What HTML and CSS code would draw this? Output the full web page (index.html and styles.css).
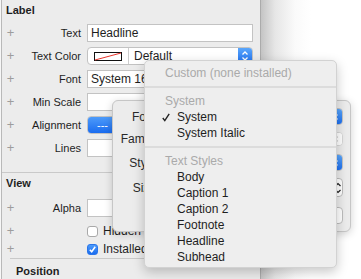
FILE: index.html
```html
<!doctype html>
<html lang="en">
  <head>
    <meta charset="UTF-8" />
    <meta name="viewport" content="width=device-width, initial-scale=1.0" />
    <title>Attributes Inspector</title>
    <link rel="stylesheet" href="styles.css">
  </head>
  <body>
    <!-- Inspector panel -->
    <div class="panel">
      <div class="section-title">Label</div>
      <div class="rows">
        <div class="row">
          <span class="plus">+</span>
          <span class="label">Text</span>
          <div class="field">Headline</div>
        </div>
        <div class="row">
          <span class="plus">+</span>
          <span class="label">Text Color</span>
          <div class="popup">
            <div class="swatch">
              <svg width="28" height="9" viewBox="0 0 28 9">
                <rect x="0.5" y="0.5" width="27" height="8" fill="#fff" stroke="#111" />
                <line x1="1" y1="8" x2="27" y2="1" stroke="#e8352c" stroke-width="1" />
              </svg>
            </div>
            <div class="popup-value">Default</div>
            <div class="stepper blue">
              <svg width="8" height="12" viewBox="0 0 8 12">
                <path d="M1.5 4.5 L4 2 L6.5 4.5 M1.5 7.5 L4 10 L6.5 7.5" fill="none" stroke="#fff" stroke-width="1.3" />
              </svg>
            </div>
          </div>
        </div>
        <div class="row">
          <span class="plus">+</span>
          <span class="label">Font</span>
          <div class="field">System 16.0</div>
        </div>
        <div class="row">
          <span class="plus">+</span>
          <span class="label">Min Scale</span>
          <div class="field"></div>
        </div>
        <div class="row">
          <span class="plus">+</span>
          <span class="label">Alignment</span>
          <div class="segmented">
            <div class="segment active">---</div>
            <div class="segment"></div>
            <div class="segment"></div>
          </div>
        </div>
        <div class="row">
          <span class="plus">+</span>
          <span class="label">Lines</span>
          <div class="field"></div>
        </div>
      </div>

      <div class="divider"></div>
      <div class="section-title">View</div>
      <div class="rows view-rows">
        <div class="row">
          <span class="plus">+</span>
          <span class="label">Alpha</span>
          <div class="field"></div>
        </div>
        <div class="row check-row">
          <span class="plus">+</span>
          <span class="label"></span>
          <label class="check"><span class="box"></span>Hidden</label>
        </div>
        <div class="row check-row">
          <span class="plus">+</span>
          <span class="label"></span>
          <label class="check">
            <span class="box checked">
              <svg width="9" height="9" viewBox="0 0 9 9">
                <path d="M1.8 4.8 L3.7 6.8 L7.2 1.8" fill="none" stroke="#fff" stroke-width="1.5" />
              </svg>
            </span>Installed
          </label>
        </div>
      </div>
      <div class="divider inset"></div>
      <div class="sub-title">Position</div>
    </div>
    <div class="backdrop"></div>

    <!-- Font popover (mostly hidden under the menu) -->
    <div class="font-popover">
      <div class="pop-row font-row">
        <span class="pop-label">Font</span>
        <div class="pop-popup">
          <span></span>
          <div class="stepper blue">
            <svg width="8" height="12" viewBox="0 0 8 12">
              <path d="M1.5 4.5 L4 2 L6.5 4.5 M1.5 7.5 L4 10 L6.5 7.5" fill="none" stroke="#fff" stroke-width="1.3" />
            </svg>
          </div>
        </div>
      </div>
      <div class="pop-row family-row">
        <span class="pop-label">Family</span>
        <div class="pop-popup disabled">
          <span></span>
          <div class="stepper grey">
            <svg width="8" height="12" viewBox="0 0 8 12">
              <path d="M1.5 4.5 L4 2 L6.5 4.5 M1.5 7.5 L4 10 L6.5 7.5" fill="none" stroke="#b5b5b5" stroke-width="1.2" />
            </svg>
          </div>
        </div>
      </div>
      <div class="pop-row style-row">
        <span class="pop-label">Style</span>
        <div class="pop-popup">
          <span></span>
          <div class="stepper blue">
            <svg width="8" height="12" viewBox="0 0 8 12">
              <path d="M1.5 4.5 L4 2 L6.5 4.5 M1.5 7.5 L4 10 L6.5 7.5" fill="none" stroke="#fff" stroke-width="1.3" />
            </svg>
          </div>
        </div>
      </div>
      <div class="pop-row size-row">
        <span class="pop-label">Size</span>
        <div class="size-field"></div>
        <div class="size-stepper">
          <svg width="8" height="16" viewBox="0 0 8 16">
            <path d="M1.5 6 L4 3.5 L6.5 6 M1.5 10 L4 12.5 L6.5 10" fill="none" stroke="#222" stroke-width="1.2" />
          </svg>
        </div>
      </div>
      <div class="pop-row button-row">
        <div class="done-btn"></div>
      </div>
    </div>

    <!-- Font menu -->
    <div class="font-menu">
      <div class="menu-item header">Custom (none installed)</div>
      <div class="menu-sep"></div>
      <div class="menu-item header">System</div>
      <div class="menu-item">
        <svg class="tick" width="8" height="9" viewBox="0 0 8 9">
          <path d="M0.8 5 L2.8 7.6 L7.2 0.8" fill="none" stroke="#222" stroke-width="1.4" />
        </svg>System
      </div>
      <div class="menu-item">System Italic</div>
      <div class="menu-sep"></div>
      <div class="menu-item header">Text Styles</div>
      <div class="menu-item">Body</div>
      <div class="menu-item">Caption 1</div>
      <div class="menu-item">Caption 2</div>
      <div class="menu-item">Footnote</div>
      <div class="menu-item">Headline</div>
      <div class="menu-item">Subhead</div>
    </div>
  </body>
</html>
```

FILE: styles.css
```css
* {
  margin: 0;
  padding: 0;
  box-sizing: border-box;
}

body {
  font-family: "Liberation Sans", Arial, sans-serif;
  background: #f7f7f7;
  color: #1e1e1e;
  display: flex;
  height: 279px;
  padding-left: 1px;
  overflow: hidden;
  position: relative;
}

.panel {
  width: 260px;
  height: 279px;
  background: #ececec;
  border-left: 1px solid #b9b9b9;
  border-right: 1px solid #ababab;
  flex-shrink: 0;
}

.backdrop {
  flex: 1;
  background: linear-gradient(to right, #c4c4c4, #e6e6e6 14px, #fafafa 34px, #fff 50px);
}

.section-title {
  height: 20px;
  line-height: 20px;
  padding-left: 4px;
  font-size: 11px;
  font-weight: bold;
}

.rows {
  padding-top: 4px;
  display: flex;
  flex-direction: column;
  gap: 5px;
}

.row {
  display: grid;
  grid-template-columns: 15px 69px 166px;
  align-items: center;
  height: 18px;
  padding-left: 1px;
}

.plus {
  color: #9d9d9d;
  font-size: 13px;
  text-align: center;
  line-height: 18px;
}

.label {
  font-size: 11px;
  text-align: right;
  padding-right: 6px;
}

.field {
  height: 18px;
  background: #fff;
  border: 1px solid #c3c3c3;
  font-size: 12px;
  line-height: 16px;
  padding-left: 3px;
  white-space: nowrap;
  overflow: hidden;
}

.popup {
  display: flex;
  height: 18px;
  background: #fff;
  border: 1px solid #c2c2c2;
  border-radius: 4px;
  font-size: 12px;
  overflow: hidden;
}

.swatch {
  width: 41px;
  border-right: 1px solid #cdcdcd;
  display: flex;
  align-items: center;
  justify-content: center;
  padding-top: 1px;
}

.popup-value {
  flex: 1;
  line-height: 16px;
  padding-left: 5px;
}

.stepper {
  width: 14px;
  display: flex;
  align-items: center;
  justify-content: center;
}

.stepper.blue {
  background: linear-gradient(#5aa6fb, #1d6ff0);
}

.stepper.grey {
  background: #fff;
}

.segmented {
  display: flex;
  height: 18px;
  border: 1px solid #c2c2c2;
  border-radius: 4px;
  background: #fff;
  overflow: hidden;
}

.segment {
  flex: 1;
  border-right: 1px solid #c9c9c9;
  font-size: 11px;
  line-height: 16px;
}

.segment.active {
  background: linear-gradient(#4d9bfa, #1a6cef);
  color: #fff;
  padding-left: 9px;
  border-right-color: #1a6cef;
}

.divider {
  height: 1px;
  background: #c9c9c9;
  margin-top: 15px;
}

.view-rows {
  padding-top: 6px;
}

.check-row {
  height: 14px;
}

.view-rows .check-row + .check-row {
  margin-top: -1px;
}

.check {
  display: flex;
  align-items: center;
  gap: 5px;
  font-size: 12px;
}

.box {
  width: 11px;
  height: 11px;
  border: 1px solid #a9a9a9;
  border-radius: 3px;
  background: #fff;
  display: flex;
  align-items: center;
  justify-content: center;
}

.box.checked {
  background: linear-gradient(#4d9bfa, #1a6cef);
  border-color: #2a75ea;
}

.divider.inset {
  margin-top: 4px;
  margin-left: 8px;
}

.sub-title {
  font-size: 11px;
  font-weight: bold;
  padding-left: 14px;
  line-height: 20px;
  padding-top: 2px;
}

/* font popover */
.font-popover {
  position: absolute;
  left: 112px;
  top: 100px;
  width: 239px;
  height: 132px;
  background: #ececec;
  border: 1px solid #c6c6c6;
  border-radius: 6px;
  box-shadow: 0 2px 8px rgba(0, 0, 0, 0.18);
  padding: 7px 7px 0 0;
  display: flex;
  flex-direction: column;
}

.pop-row {
  display: flex;
  align-items: center;
  gap: 6px;
}

.pop-label {
  width: 43px;
  text-align: right;
  font-size: 12px;
  color: #2a2a2a;
}

.font-row {
  height: 17px;
}

.family-row {
  height: 14px;
  margin-top: 7px;
}

.style-row {
  height: 17px;
  margin-top: 8px;
}

.size-row {
  height: 19px;
  margin-top: 7px;
}

.button-row {
  height: 17px;
  margin-top: 10px;
  justify-content: flex-end;
}

.pop-popup {
  flex: 1;
  height: 100%;
  display: flex;
  background: #fff;
  border: 1px solid #c2c2c2;
  border-radius: 4px;
  overflow: hidden;
  font-size: 12px;
}

.pop-popup span {
  flex: 1;
  padding-left: 5px;
}

.pop-popup.disabled {
  border-color: #d6d6d6;
}

.size-field {
  flex: 1;
  height: 17px;
  background: #fff;
  border: 1px solid #c3c3c3;
  font-size: 12px;
  padding-left: 3px;
}

.size-stepper {
  width: 11px;
  height: 19px;
  margin-left: -3px;
  background: #fff;
  border: 1px solid #bdbdbd;
  border-radius: 4px;
  display: flex;
  align-items: center;
  justify-content: center;
}

.done-btn {
  width: 60px;
  height: 17px;
  background: #fff;
  border: 1px solid #bdbdbd;
  border-radius: 4px;
}

/* font menu */
.font-menu {
  position: absolute;
  left: 144px;
  top: 60px;
  width: 193px;
  height: 208px;
  background: #eeeeee;
  border: 1px solid #d2d2d2;
  border-radius: 5px;
  box-shadow: 0 4px 12px rgba(0, 0, 0, 0.22);
  padding-top: 4px;
}

.menu-item {
  height: 16px;
  line-height: 16px;
  font-size: 12px;
  padding-left: 32px;
  color: #1e1e1e;
  position: relative;
}

.menu-item.header {
  padding-left: 20px;
  color: #aaaaaa;
}

.tick {
  position: absolute;
  left: 17px;
  top: 4px;
}

.menu-sep {
  height: 12px;
  display: flex;
  align-items: center;
}

.menu-sep::before {
  content: "";
  flex: 1;
  height: 2px;
  background: #dcdcdc;
}
```
